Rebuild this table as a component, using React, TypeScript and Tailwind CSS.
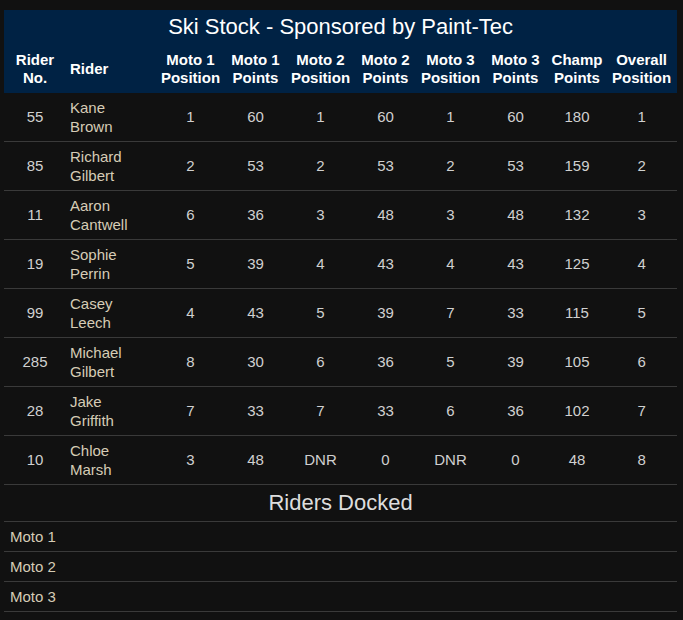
import React from 'react';

interface RiderRow {
  no: number;
  first: string;
  last: string;
  m1Pos: string;
  m1Pts: string;
  m2Pos: string;
  m2Pts: string;
  m3Pos: string;
  m3Pts: string;
  champ: string;
  overall: string;
}

const riders: RiderRow[] = [
  { no: 55, first: 'Kane', last: 'Brown', m1Pos: '1', m1Pts: '60', m2Pos: '1', m2Pts: '60', m3Pos: '1', m3Pts: '60', champ: '180', overall: '1' },
  { no: 85, first: 'Richard', last: 'Gilbert', m1Pos: '2', m1Pts: '53', m2Pos: '2', m2Pts: '53', m3Pos: '2', m3Pts: '53', champ: '159', overall: '2' },
  { no: 11, first: 'Aaron', last: 'Cantwell', m1Pos: '6', m1Pts: '36', m2Pos: '3', m2Pts: '48', m3Pos: '3', m3Pts: '48', champ: '132', overall: '3' },
  { no: 19, first: 'Sophie', last: 'Perrin', m1Pos: '5', m1Pts: '39', m2Pos: '4', m2Pts: '43', m3Pos: '4', m3Pts: '43', champ: '125', overall: '4' },
  { no: 99, first: 'Casey', last: 'Leech', m1Pos: '4', m1Pts: '43', m2Pos: '5', m2Pts: '39', m3Pos: '7', m3Pts: '33', champ: '115', overall: '5' },
  { no: 285, first: 'Michael', last: 'Gilbert', m1Pos: '8', m1Pts: '30', m2Pos: '6', m2Pts: '36', m3Pos: '5', m3Pts: '39', champ: '105', overall: '6' },
  { no: 28, first: 'Jake', last: 'Griffith', m1Pos: '7', m1Pts: '33', m2Pos: '7', m2Pts: '33', m3Pos: '6', m3Pts: '36', champ: '102', overall: '7' },
  { no: 10, first: 'Chloe', last: 'Marsh', m1Pos: '3', m1Pts: '48', m2Pos: 'DNR', m2Pts: '0', m3Pos: 'DNR', m3Pts: '0', champ: '48', overall: '8' },
];

const headers: [string, string][] = [
  ['Moto 1', 'Position'],
  ['Moto 1', 'Points'],
  ['Moto 2', 'Position'],
  ['Moto 2', 'Points'],
  ['Moto 3', 'Position'],
  ['Moto 3', 'Points'],
  ['Champ', 'Points'],
  ['Overall', 'Position'],
];

export default function App() {
  return (
    <div className="min-h-[620px] bg-[#111111] pt-[10px] pl-[4px] pr-[6px] font-['Liberation_Sans',Arial,sans-serif]">
      <table className="w-[673px] table-fixed border-collapse text-[15px] leading-[19px]">
        <colgroup>
          <col className="w-[62px]" />
          <col className="w-[92px]" />
          <col className="w-[65px]" />
          <col className="w-[65px]" />
          <col className="w-[65px]" />
          <col className="w-[65px]" />
          <col className="w-[65px]" />
          <col className="w-[65px]" />
          <col className="w-[58px]" />
          <col className="w-[71px]" />
        </colgroup>
        <thead className="bg-[#002244] text-white">
          <tr className="h-[34px]">
            <th colSpan={10} className="text-center text-[22px] font-normal leading-[24px]">
              Ski Stock - Sponsored by Paint-Tec
            </th>
          </tr>
          <tr className="h-[49px] leading-[18px]">
            <th className="text-center font-bold">
              Rider
              <br />
              No.
            </th>
            <th className="pl-[4px] text-left font-bold">Rider</th>
            {headers.map(([a, b], i) => (
              <th key={i} className="text-center font-bold">
                {a}
                <br />
                {b}
              </th>
            ))}
          </tr>
        </thead>
        <tbody className="text-[#d0d0d0]">
          {riders.map((r, i) => (
            <tr key={r.no} className={i === 0 ? 'h-[48px] border-b border-[#3a3a3a]' : 'h-[49px] border-b border-[#3a3a3a]'}>
              <td className="text-center">{r.no}</td>
              <td className="pl-[4px] text-left text-[#d6ccb6]">
                {r.first}
                <br />
                {r.last}
              </td>
              <td className="text-center">{r.m1Pos}</td>
              <td className="text-center">{r.m1Pts}</td>
              <td className="text-center">{r.m2Pos}</td>
              <td className="text-center">{r.m2Pts}</td>
              <td className="text-center">{r.m3Pos}</td>
              <td className="text-center">{r.m3Pts}</td>
              <td className="text-center">{r.champ}</td>
              <td className="text-center">{r.overall}</td>
            </tr>
          ))}
          <tr className="h-[37px] border-b border-[#3a3a3a]">
            <td colSpan={10} className="text-center text-[22px] text-[#dddddd]">
              Riders Docked
            </td>
          </tr>
          {['Moto 1', 'Moto 2', 'Moto 3'].map((m) => (
            <tr key={m} className="h-[30px] border-b border-[#3a3a3a]">
              <td colSpan={10} className="pl-[6px] text-left text-[#d6ccb6]">
                {m}
              </td>
            </tr>
          ))}
        </tbody>
      </table>
    </div>
  );
}
